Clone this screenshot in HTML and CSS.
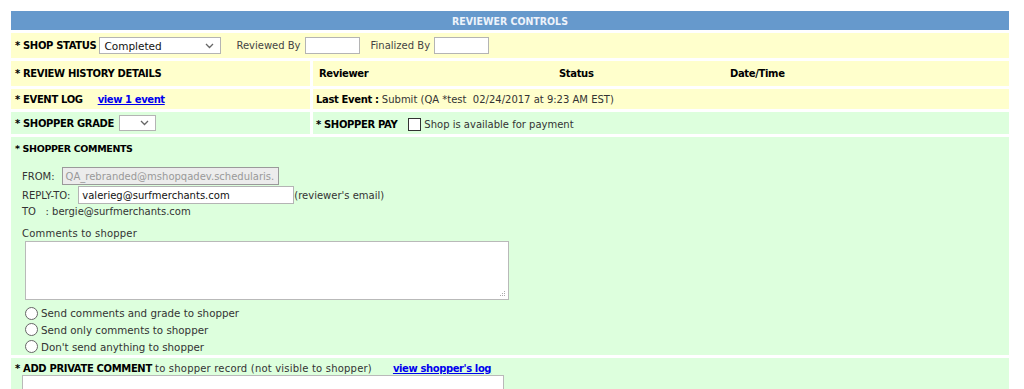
FILE: index.html
```html
<!DOCTYPE html>
<html>
<head>
<meta charset="utf-8">
<link rel="stylesheet" href="styles.css">
</head>
<body>
<div class="panel">
  <div class="title span">REVIEWER CONTROLS</div>

  <div class="cell yellow span r1">
    <b class="lbl">* SHOP STATUS</b>
    <div class="select status"><span>Completed</span><svg width="9" height="6" viewBox="0 0 9 6"><path d="M1 1 L4.5 4.5 L8 1" fill="none" stroke="#666" stroke-width="1.3"/></svg></div>
    <span class="muted rev">Reviewed By</span>
    <span class="input small"></span>
    <span class="muted fin">Finalized By</span>
    <span class="input small"></span>
  </div>

  <div class="cell yellow r2"><b class="lbl">* REVIEW HISTORY DETAILS</b></div>
  <div class="cell yellow r2 hist">
    <b class="h1">Reviewer</b><b class="h2">Status</b><b class="h3">Date/Time</b>
  </div>

  <div class="cell yellow r3"><b class="lbl">* EVENT LOG</b><a class="link ev" href="#">view 1 event</a></div>
  <div class="cell yellow r3 right"><b>Last Event :</b>&nbsp;<span class="txt">Submit (QA *test &nbsp;02/24/2017 at 9:23 AM EST)</span></div>

  <div class="cell green r4"><b class="lbl">* SHOPPER GRADE</b><div class="select grade"><span></span><svg width="9" height="6" viewBox="0 0 9 6"><path d="M1 1 L4.5 4.5 L8 1" fill="none" stroke="#666" stroke-width="1.3"/></svg></div></div>
  <div class="cell green r4 right pay"><b>* SHOPPER PAY</b><span class="check"></span><span class="txt">Shop is available for payment</span></div>

  <div class="cell green span comments">
    <b class="lbl sm">* SHOPPER COMMENTS</b>
    <div class="line from"><span class="key">FROM:</span><span class="input disabled">QA_rebranded@mshopqadev.schedularis.</span></div>
    <div class="line reply"><span class="key">REPLY-TO:</span><span class="input wide">valerieg@surfmerchants.com</span><span class="txt">(reviewer's email)</span></div>
    <div class="line to"><span class="txt">TO &nbsp;&nbsp;: bergie@surfmerchants.com</span></div>
    <div class="line cts"><span class="txt">Comments to shopper</span></div>
    <div class="area">
      <svg class="grip" width="7" height="7" viewBox="0 0 7 7"><g fill="#aaa"><rect x="5" y="1" width="1" height="1"/><rect x="3" y="3" width="1" height="1"/><rect x="5" y="3" width="1" height="1"/><rect x="1" y="5" width="1" height="1"/><rect x="3" y="5" width="1" height="1"/><rect x="5" y="5" width="1" height="1"/></g></svg>
    </div>
    <div class="radio first"><span class="dot"></span><span>Send comments and grade to shopper</span></div>
    <div class="radio"><span class="dot"></span><span>Send only comments to shopper</span></div>
    <div class="radio"><span class="dot"></span><span>Don't send anything to shopper</span></div>
  </div>

  <div class="cell green span private">
    <div class="pline"><b class="lbl">* ADD PRIVATE COMMENT</b>&nbsp;<span class="txt">to shopper record (not visible to shopper)</span><a class="link log" href="#">view shopper's log</a></div>
    <div class="area2"></div>
  </div>
</div>
</body>
</html>
```

FILE: styles.css
```css
html, body {
  margin: 0;
  padding: 0;
  background: #fff;
}
body {
  font-family: "DejaVu Sans", Verdana, sans-serif;
  font-size: 10px;
  color: #333;
  height: 389px;
  overflow: hidden;
}
.panel {
  margin: 11px 0 0 11px;
  width: 998px;
  display: grid;
  grid-template-columns: 299px 696px;
  column-gap: 3px;
  row-gap: 3px;
}
.span { grid-column: 1 / 3; }
.title {
  height: 19px;
  background: #6699cc;
  color: #eef3fb;
  font-family: "DejaVu Sans Condensed", "DejaVu Sans", sans-serif;
  font-weight: bold;
  font-size: 10.5px;
  display: flex;
  align-items: center;
  justify-content: center;
}
.cell {
  display: flex;
  align-items: center;
  padding-left: 4px;
  box-sizing: border-box;
}
.yellow { background: #ffffcc; }
.green { background: #ddffdd; }
.right { padding-left: 3px; }
b { color: #000; font-weight: bold; letter-spacing: -0.35px; }
.lbl { color: #000; }
.r1 { height: 25px; }
.r2 { height: 25px; }
.r3 { height: 20px; }
.r4 { height: 22px; }
.select {
  box-sizing: border-box;
  height: 17px;
  background: #fff;
  border: 1px solid #b4b4b4;
  display: flex;
  align-items: center;
  justify-content: space-between;
  padding: 0 6px 0 4px;
  color: #111;
  font-size: 10.5px;
}
.status { width: 122px; margin-left: 3px; }
.grade { width: 37px; height: 16px; margin-left: 5px; }
.muted { color: #444; }
.rev { margin-left: 15px; margin-right: 4px; }
.fin { margin-left: 11px; margin-right: 4px; }
.input {
  box-sizing: border-box;
  height: 17px;
  background: #fff;
  border: 1px solid #b4b4b4;
  display: inline-flex;
  align-items: center;
  padding-left: 3px;
  color: #111;
  overflow: hidden;
  white-space: nowrap;
}
.small { width: 55px; }
.hist { padding-left: 6px; }
.hist .h1 { width: 240px; }
.hist .h2 { width: 171px; }
.link {
  color: #0000ee;
  font-weight: bold;
  text-decoration: underline;
  letter-spacing: -0.4px;
}
.ev { margin-left: 15px; }
.pay .check {
  width: 11px;
  height: 11px;
  border: 1px solid #333;
  background: #fff;
  margin: 0 3px 0 11px;
}
.pay { padding-top: 3px; }
.comments {
  height: 218px;
  flex-direction: column;
  align-items: flex-start;
  padding-left: 4px;
}
.comments .sm { font-size: 9.5px; margin-top: 6px; }
.line {
  display: flex;
  align-items: center;
  padding-left: 7px;
}
.from { margin-top: 13px; }
.from .input.disabled {
  width: 217px;
  height: 18px;
  background: #ececec;
  color: #999;
  border-color: #9a9a9a;
  margin-left: 7px;
}
.reply { margin-top: 1px; }
.reply .wide { width: 216px; height: 18px; margin-left: 8px; }
.to { margin-top: 1px; height: 14px; }
.cts { margin-top: 8px; height: 13px; }
.cts .txt { letter-spacing: 0.2px; }
.area {
  position: relative;
  margin: 1px 0 0 10px;
  width: 484px;
  height: 60px;
  box-sizing: border-box;
  border: 1px solid #b9b9b9;
  background: #fff;
}
.grip { position: absolute; right: 2px; bottom: 2px; }
.radio {
  display: flex;
  align-items: center;
  margin-left: 10px;
  height: 17px;
  font-size: 10.3px;
}
.radio.first { margin-top: 5px; }
.dot {
  width: 11px;
  height: 11px;
  border: 1px solid #666;
  border-radius: 50%;
  background: #fff;
  margin-right: 3px;
}
.private {
  height: 40px;
  flex-direction: column;
  align-items: flex-start;
}
.pline {
  margin-top: 5px;
  display: flex;
  align-items: center;
}
.pline .txt { letter-spacing: 0.2px; }
.log { margin-left: 21px; }
.area2 {
  margin: 1px 0 0 7px;
  width: 482px;
  height: 30px;
  box-sizing: border-box;
  border: 1px solid #b9b9b9;
  background: #fff;
}
```
